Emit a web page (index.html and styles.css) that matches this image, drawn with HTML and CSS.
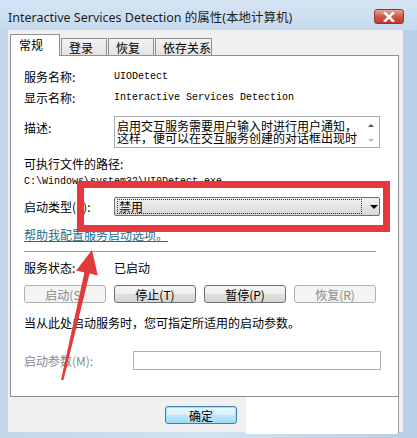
FILE: index.html
```html
<!DOCTYPE html>
<html lang="zh-CN">
<head>
  <meta charset="UTF-8">
  <title>Interactive Services Detection 的属性(本地计算机)</title>
  <link rel="stylesheet" href="styles.css">
</head>
<body>
  <div class="window">
    <div class="titlebar">
      <span class="title">Interactive Services Detection 的属性(本地计算机)</span>
      <div class="close">
        <svg width="14" height="10" viewBox="0 0 14 10"><path d="M3 1 L11 9 M11 1 L3 9" stroke="#fff" stroke-width="2.6" stroke-linecap="square"/></svg>
      </div>
    </div>

    <div class="client">
      <div class="tabs">
        <div class="tab active">常规</div>
        <div class="tab w46">登录</div>
        <div class="tab w46">恢复</div>
        <div class="tab w57">依存关系</div>
      </div>

      <div class="panel">
        <div class="row r-name">
          <span class="label">服务名称:</span>
          <span class="mono">UIODetect</span>
        </div>
        <div class="row r-display">
          <span class="label">显示名称:</span>
          <span class="mono">Interactive Services Detection</span>
        </div>
        <div class="row r-desc">
          <span class="label desc-label">描述:</span>
          <div class="desc-box">
            <div class="desc-text">启用交互服务需要用户输入时进行用户通知，这样，便可以在交互服务创建的对话框出现时</div>
            <div class="scroll">
              <span class="up"></span>
              <span class="down"></span>
            </div>
          </div>
        </div>
        <div class="path-label">可执行文件的路径:</div>
        <div class="mono path">C:\Windows\system32\UI0Detect.exe</div>
        <div class="row r-type">
          <span class="label">启动类型(E):</span>
          <div class="combo">
            <span class="combo-focus">禁用</span>
            <span class="combo-arrow"></span>
          </div>
        </div>
        <a class="help" href="#">帮助我配置服务启动选项。</a>
        <div class="sep"></div>
        <div class="row r-status">
          <span class="label">服务状态:</span>
          <span>已启动</span>
        </div>
        <div class="btn-row">
          <button class="btn disabled">启动(S)</button>
          <button class="btn">停止(T)</button>
          <button class="btn">暂停(P)</button>
          <button class="btn disabled">恢复(R)</button>
        </div>
        <div class="hint">当从此处启动服务时，您可指定所适用的启动参数。</div>
        <div class="row r-param">
          <span class="label param-label">启动参数(M):</span>
          <div class="param-input"></div>
        </div>
      </div>

      <div class="footer">
        <button class="ok">确定</button>
      </div>
    </div>

    <div class="crop"></div>
    <div class="redbox"></div>
    <svg class="arrow" width="417" height="438" viewBox="0 0 417 438">
      <polygon fill="#e23b3b" points="61,380 63.5,380 89.6,273.6 97.8,275.6 92,250 76.2,270.4 84.4,272.4"/>
    </svg>
  </div>
</body>
</html>
```

FILE: styles.css
```css
body {
  margin: 0;
  font-family: "Noto Sans CJK SC", "Noto Sans", sans-serif;
  font-size: 12px;
  color: #000;
  background: #fff;
}
.window {
  position: relative;
  width: 417px;
  height: 438px;
  overflow: hidden;
  display: flex;
  flex-direction: column;
  padding: 0 14px 6px 8px;
  box-sizing: border-box;
  background: linear-gradient(90deg, #c2d6eb 0%, #d3e2f1 50%, #b8cfe7 100%);
}
.titlebar {
  height: 30px;
  flex: none;
  display: flex;
  align-items: center;
  margin: 0 -14px 0 -8px;
  padding: 0 13px 0 8px;
  background: linear-gradient(180deg, #d6e5f4 0%, #c6d9ee 100%);
}
.title {
  flex: 1;
  font-family: "Noto Sans", "Noto Sans CJK SC", sans-serif;
  font-size: 12.5px;
  color: #1f1f1f;
  margin-top: 3px;
}
.close {
  width: 30px;
  height: 15px;
  margin-top: 3px;
  display: flex;
  align-items: center;
  justify-content: center;
  border: 1px solid #8a3a33;
  border-radius: 3px;
  box-sizing: border-box;
  background: linear-gradient(180deg, #e8a493 0%, #d4574a 50%, #c0392b 100%);
}
.client {
  flex: 1;
  display: flex;
  flex-direction: column;
  background: #f0f0f0;
  padding: 4px 4px 0 2px;
}
.tabs {
  display: flex;
  align-items: flex-end;
  height: 21px;
  position: relative;
  z-index: 1;
}
.tab {
  height: 17px;
  line-height: 17px;
  box-sizing: border-box;
  border: 1px solid #8e8f8f;
  border-bottom: none;
  padding-left: 7px;
  margin-right: 1px;
  background: linear-gradient(180deg, #f3f3f3 0%, #e3e3e3 100%);
}
.tab.active {
  width: 50px;
  height: 22px;
  line-height: 20px;
  padding-left: 8px;
  background: #fff;
  margin-bottom: -1px;
}
.w46 { width: 46px; }
.w57 { width: 57px; }
.panel {
  height: 342px;
  box-sizing: border-box;
  border: 1px solid #8e8f8f;
  background: #fff;
  padding: 13px 0 0 13px;
  display: flex;
  flex-direction: column;
  align-items: flex-start;
}
.row {
  display: flex;
  align-items: center;
  line-height: 16px;
}
.label {
  width: 90px;
  flex: none;
}
.mono {
  font-family: "Liberation Mono", monospace;
  font-size: 10px;
  line-height: 16px;
}
.r-display { margin-top: 5px; }
.r-desc {
  margin-top: 10px;
  align-items: flex-start;
}
.desc-label { padding-top: 4px; }
.desc-box {
  width: 266px;
  height: 32px;
  box-sizing: border-box;
  border: 1px solid #a5acb5;
  display: flex;
}
.desc-text {
  flex: 1;
  line-height: 12px;
  padding: 3px 0 0 2px;
  overflow: hidden;
}
.scroll {
  width: 16px;
  display: flex;
  flex-direction: column;
  justify-content: space-between;
  align-items: center;
  padding: 7px 0 5px;
}
.up, .down {
  width: 0;
  height: 0;
  border-left: 3px solid transparent;
  border-right: 3px solid transparent;
}
.up { border-bottom: 3px solid #555; }
.down { border-top: 3px solid #bbb; }
.path-label {
  margin-top: 8px;
  line-height: 16px;
}
.path { margin-top: 2px; }
.r-type { margin-top: 7px; }
.combo {
  width: 266px;
  height: 19px;
  box-sizing: border-box;
  border: 1px solid #707070;
  border-radius: 2px;
  background: linear-gradient(180deg, #f2f2f2 0%, #e6e6e6 50%, #d6d6d6 100%);
  display: flex;
  align-items: center;
  padding: 0 0 0 2px;
}
.combo-focus {
  width: 245px;
  height: 15px;
  line-height: 14px;
  box-sizing: border-box;
  border: 1px dotted #333;
  padding-left: 1px;
}
.combo-arrow {
  margin-left: 8px;
  width: 0;
  height: 0;
  border-left: 4px solid transparent;
  border-right: 4px solid transparent;
  border-top: 4px solid #000;
}
.help {
  margin-top: 11px;
  line-height: 16px;
  color: #1d6d8c;
  text-decoration: underline;
}
.sep {
  margin-top: 8px;
  width: 352px;
  height: 1px;
  background: #a0a0a0;
}
.r-status { margin-top: 8px; }
.btn-row {
  margin-top: 9px;
  display: flex;
  gap: 8px;
}
.btn {
  width: 82px;
  height: 18px;
  padding: 0;
  font-family: inherit;
  font-size: 12px;
  line-height: 15px;
  border: 1px solid #707070;
  border-radius: 3px;
  background: linear-gradient(180deg, #f6f6f6 0%, #eeeeee 50%, #e0e0e0 51%, #d6d6d6 100%);
  color: #000;
}
.btn.disabled {
  border-color: #adb2b5;
  background: #f4f4f4;
  color: #8a8a8a;
}
.hint {
  margin-top: 12px;
  line-height: 16px;
}
.r-param { margin-top: 20px; }
.param-label {
  width: 109px;
  color: #8a8a8a;
}
.param-input {
  width: 248px;
  height: 19px;
  box-sizing: border-box;
  border: 1px solid #adb2b5;
  background: #fff;
}
.footer {
  flex: 1;
  display: flex;
  align-items: flex-start;
  padding: 9px 0 0 155px;
}
.ok {
  width: 72px;
  height: 18px;
  padding: 0;
  font-family: inherit;
  font-size: 12px;
  line-height: 15px;
  border: 1px solid #3c7fb1;
  border-radius: 3px;
  background: linear-gradient(180deg, #eaf6fd 0%, #d9f0fc 50%, #bee6fd 51%, #a7d9f5 100%);
  box-shadow: inset 0 0 0 1px #9fe0f7;
}
.crop {
  position: absolute;
  left: 246px;
  top: 397px;
  width: 152px;
  height: 37px;
  background: #fff;
  border-right: 1px solid #a0a0a0;
}
.redbox {
  position: absolute;
  left: 77px;
  top: 181px;
  width: 313px;
  height: 51px;
  box-sizing: border-box;
  border: 7px solid #e5393f;
}
.arrow {
  position: absolute;
  left: 0;
  top: 0;
  pointer-events: none;
}
```
